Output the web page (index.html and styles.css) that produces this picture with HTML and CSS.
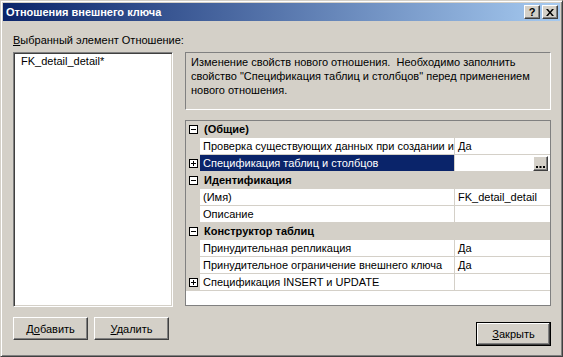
FILE: index.html
```html
<!DOCTYPE html>
<html lang="ru">
<head>
<meta charset="utf-8">
<title>Отношения внешнего ключа</title>
<link rel="stylesheet" href="styles.css">
</head>
<body>
<div class="window">
  <div class="titlebar">
    <span class="title">Отношения внешнего ключа</span>
    <div class="tbtns">
      <div class="tbtn help">?</div>
      <div class="tbtn close"><svg width="8" height="7" viewBox="0 0 8 7"><path d="M0 0h2l2 2.5L6 0h2L5 3.5 8 7H6L4 4.5 2 7H0l3-3.5z" fill="#000"/></svg></div>
    </div>
  </div>
  <div class="body">
    <div class="left">
      <div class="label"><u>В</u>ыбранный элемент Отношение:</div>
      <div class="listbox"><div class="item">FK_detail_detail*</div></div>
      <div class="btnrow">
        <button class="btn">Д<u>о</u>бавить</button>
        <button class="btn"><u>У</u>далить</button>
      </div>
    </div>
    <div class="right">
      <div class="desc">Изменение свойств нового отношения.&nbsp; Необходимо заполнить<br>свойство "Спецификация таблиц и столбцов" перед применением<br>нового отношения.</div>
      <div class="grid">
        <div class="row cat"><div class="gutter"><svg class="glyph" width="9" height="9" viewBox="0 0 9 9"><rect x="0.5" y="0.5" width="8" height="8" fill="#fff" stroke="#000"/><path d="M2 4.5h5" stroke="#000"/></svg></div><div class="name">(Общие)</div></div>
        <div class="row"><div class="gutter"></div><div class="name">Проверка существующих данных при создании и</div><div class="value">Да</div></div>
        <div class="row sel"><div class="gutter"><svg class="glyph" width="9" height="9" viewBox="0 0 9 9"><rect x="0.5" y="0.5" width="8" height="8" fill="#fff" stroke="#000"/><path d="M2 4.5h5M4.5 2v5" stroke="#000"/></svg></div><div class="name">Спецификация таблиц и столбцов</div><div class="value"><div class="dots"><svg width="9" height="2" viewBox="0 0 9 2"><rect x="0" y="0" width="2" height="2" fill="#000"/><rect x="3.5" y="0" width="2" height="2" fill="#000"/><rect x="7" y="0" width="2" height="2" fill="#000"/></svg></div></div></div>
        <div class="row cat"><div class="gutter"><svg class="glyph" width="9" height="9" viewBox="0 0 9 9"><rect x="0.5" y="0.5" width="8" height="8" fill="#fff" stroke="#000"/><path d="M2 4.5h5" stroke="#000"/></svg></div><div class="name">Идентификация</div></div>
        <div class="row"><div class="gutter"></div><div class="name">(Имя)</div><div class="value">FK_detail_detail</div></div>
        <div class="row"><div class="gutter"></div><div class="name">Описание</div><div class="value"></div></div>
        <div class="row cat"><div class="gutter"><svg class="glyph" width="9" height="9" viewBox="0 0 9 9"><rect x="0.5" y="0.5" width="8" height="8" fill="#fff" stroke="#000"/><path d="M2 4.5h5" stroke="#000"/></svg></div><div class="name">Конструктор таблиц</div></div>
        <div class="row"><div class="gutter"></div><div class="name">Принудительная репликация</div><div class="value">Да</div></div>
        <div class="row"><div class="gutter"></div><div class="name">Принудительное ограничение внешнего ключа</div><div class="value">Да</div></div>
        <div class="row"><div class="gutter"><svg class="glyph" width="9" height="9" viewBox="0 0 9 9"><rect x="0.5" y="0.5" width="8" height="8" fill="#fff" stroke="#000"/><path d="M2 4.5h5M4.5 2v5" stroke="#000"/></svg></div><div class="name">Спецификация INSERT и UPDATE</div><div class="value"></div></div>
      </div>
      <div class="closerow"><button class="btn default"><u>З</u>акрыть</button></div>
    </div>
  </div>
</div>
</body>
</html>
```

FILE: styles.css
```css
* { box-sizing: border-box; }
body {
  margin: 0;
  font-family: "Liberation Sans", Arial, sans-serif;
  font-size: 11px;
  color: #000;
}
u { text-decoration: underline; text-underline-offset: 1px; }

.window {
  width: 563px;
  height: 357px;
  background: #D4D0C8;
  border: 1px solid;
  border-color: #D4D0C8 #404040 #404040 #D4D0C8;
  box-shadow: inset 1px 1px #fff, inset -1px -1px #808080;
  padding: 2px;
  display: flex;
  flex-direction: column;
}

.titlebar {
  height: 18px;
  background: linear-gradient(to right, #0A246A, #A6CAF0);
  display: flex;
  align-items: center;
  justify-content: space-between;
  padding: 0 2px 0 3px;
}
.title {
  color: #fff;
  font-weight: bold;
  font-size: 11px;
}
.tbtns { display: flex; gap: 2px; }
.tbtn {
  width: 16px;
  height: 14px;
  background: #D4D0C8;
  border: 1px solid;
  border-color: #fff #404040 #404040 #fff;
  box-shadow: inset -1px -1px #808080;
  display: flex;
  align-items: center;
  justify-content: center;
  font-weight: bold;
  font-size: 11px;
  line-height: 12px;
}

.body {
  flex: 1;
  display: flex;
  padding-left: 10px;
}

.left {
  width: 160px;
  display: flex;
  flex-direction: column;
  padding-top: 13px;
}
.label {
  height: 13px;
  line-height: 13px;
  margin-bottom: 5px;
  white-space: nowrap;
}
.listbox {
  height: 255px;
  background: #fff;
  border: 1px solid;
  border-color: #808080 #fff #fff #808080;
  box-shadow: inset 1px 1px #404040, inset -1px -1px #D4D0C8;
  padding: 2px 0 0 7px;
  line-height: 13px;
}

.btnrow {
  display: flex;
  gap: 6px;
  margin-top: 10px;
}
.btn {
  width: 75px;
  height: 23px;
  padding: 0;
  font: inherit;
  color: #000;
  background: #D4D0C8;
  border: 1px solid;
  border-color: #fff #404040 #404040 #fff;
  box-shadow: inset -1px -1px #808080, inset 1px 1px #D4D0C8;
}
.btn.default {
  height: 24px;
  border: 1px solid #000;
  box-shadow: inset -1px -1px #404040, inset 1px 1px #fff, inset -2px -2px #808080;
}

.right {
  width: 366px;
  margin-left: 12px;
  padding-top: 31px;
  display: flex;
  flex-direction: column;
}
.desc {
  height: 58px;
  border: 1px solid;
  border-color: #808080 #fff #fff #808080;
  padding: 2px 5px;
  line-height: 14px;
  white-space: nowrap;
}

.grid {
  margin-top: 10px;
  height: 186px;
  border: 1px solid #808080;
  background: #fff;
}
.row {
  display: flex;
  height: 17px;
  border-bottom: 1px solid #D4D0C8;
  line-height: 16px;
}
.gutter {
  width: 14px;
  flex: none;
  background: #D4D0C8;
  display: flex;
  align-items: center;
  justify-content: center;
}
.glyph { display: block; }
.name {
  width: 255px;
  flex: none;
  padding-left: 3px;
  border-right: 1px solid #D4D0C8;
  overflow: hidden;
  white-space: nowrap;
}
.value {
  flex: 1;
  padding-left: 3px;
  display: flex;
  overflow: hidden;
  white-space: nowrap;
}
.cat { background: #D4D0C8; }
.cat .name {
  width: auto;
  flex: 1;
  border-right: none;
  font-weight: bold;
  padding-left: 4px;
}
.sel .name {
  background: #0A246A;
  color: #fff;
}
.dots {
  margin: 1px 2px 0 auto;
  width: 15px;
  height: 15px;
  background: #D4D0C8;
  border: 1px solid;
  border-color: #fff #404040 #404040 #fff;
  box-shadow: inset -1px -1px #808080;
  display: flex;
  align-items: flex-end;
  justify-content: center;
  padding-bottom: 2px;
}
.dots svg { display: block; }

.closerow {
  display: flex;
  justify-content: flex-end;
  margin-top: 16px;
}
```
